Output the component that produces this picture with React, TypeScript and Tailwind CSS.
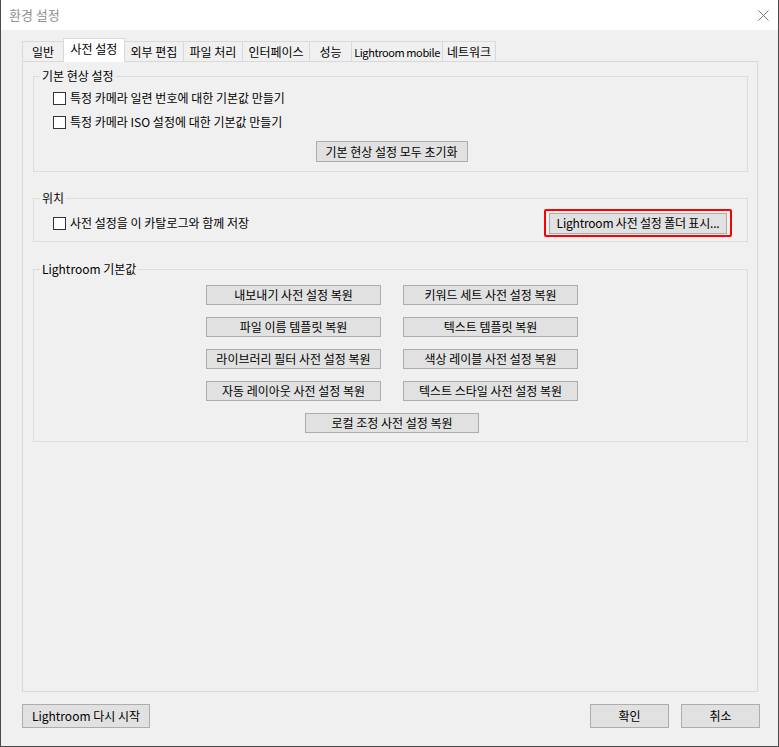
import React from "react";

function Checkbox() {
  return <span className="w-[13px] h-[13px] border border-[#333333] bg-white shrink-0" />;
}

function Tab({ label, cls }: { label: string; cls: string }) {
  return <div className={cls}>{label}</div>;
}

export default function App() {
  const tabBase =
    "h-[20px] border-t border-[#d9d9d9] bg-[#f0f0f0] flex items-center justify-center whitespace-nowrap shrink-0 overflow-hidden";
  const btn =
    "border border-[#adadad] bg-[#e1e1e1] flex items-center justify-center whitespace-nowrap";
  return (
    <div className="w-[779px] h-[747px] flex flex-col bg-[#f0f0f0] border-x border-b border-[#4a4a4a] font-['Noto_Sans_CJK_KR',sans-serif] text-[12px] leading-[16px] tracking-[0px] text-black overflow-hidden">
      {/* title bar */}
      <div className="h-[30px] bg-white flex items-center justify-between pl-[8px] pr-[9px] shrink-0">
        <span className="text-[#8f8f8f] text-[13px]">환경 설정</span>
        <svg width="11" height="11" viewBox="0 0 11 11">
          <path d="M0.5 0.5 L10.5 10.5 M10.5 0.5 L0.5 10.5" stroke="#777777" strokeWidth="1" />
        </svg>
      </div>

      <div className="flex flex-col pt-[8px]">
        <div className="pl-[21px] pr-[20px] flex flex-col">
          {/* tabs */}
          <div className="relative z-10 h-[23px] flex items-end">
            <Tab label="일반" cls={`${tabBase} w-[41px] border-l`} />
            <div className="h-[24px] -mb-px w-[62px] shrink-0 whitespace-nowrap bg-white border-t border-x border-[#d9d9d9] flex items-center justify-center pb-[3px]">
              사전 설정
            </div>
            <Tab label="외부 편집" cls={`${tabBase} w-[58px]`} />
            <Tab label="파일 처리" cls={`${tabBase} w-[59px] border-l`} />
            <Tab label="인터페이스" cls={`${tabBase} w-[67px] border-l`} />
            <Tab label="성능" cls={`${tabBase} w-[42px] border-l`} />
            <Tab label="Lightroom mobile" cls={`${tabBase} w-[91px] border-l text-[11px] tracking-[-0.4px]`} />
            <Tab label="네트워크" cls={`${tabBase} w-[54px] border-x`} />
          </div>

          {/* panel */}
          <div className="h-[631px] border border-[#d9d9d9] bg-[#f0f0f0] pt-[14px] pl-[10px] pr-[9px] flex flex-col">
            {/* group 1 */}
            <div className="relative border border-[#dcdcdc] pt-[13px] pb-[9px] flex flex-col">
              <span className="absolute -top-[9px] left-[6px] px-[2px] bg-[#f0f0f0]">기본 현상 설정</span>
              <div className="h-[16px] pl-[19px] flex items-center gap-[4px]">
                <Checkbox />
                <span>특정 카메라 일련 번호에 대한 기본값 만들기</span>
              </div>
              <div className="h-[16px] mt-[8px] pl-[19px] flex items-center gap-[4px]">
                <Checkbox />
                <span>특정 카메라 ISO 설정에 대한 기본값 만들기</span>
              </div>
              <div className="mt-[11px] flex justify-center pl-[2px]">
                <div className={`${btn} w-[152px] h-[21px]`}>기본 현상 설정 모두 초기화</div>
              </div>
            </div>

            {/* group 2 */}
            <div className="relative mt-[26px] border border-[#dcdcdc] pt-[10px] pb-[4px] pl-[19px] pr-[15px] flex items-center justify-between">
              <span className="absolute -top-[9px] left-[6px] px-[2px] bg-[#f0f0f0]">위치</span>
              <div className="h-[16px] flex items-center gap-[4px]">
                <Checkbox />
                <span>사전 설정을 이 카탈로그와 함께 저장</span>
              </div>
              <div className="w-[188px] h-[28px] border-2 border-[#ff0000] rounded-[2px] flex items-center justify-center">
                <div className={`${btn} w-[178px] h-[21px] tracking-[-0.2px]`}>Lightroom 사전 설정 폴더 표시...</div>
              </div>
            </div>

            {/* group 3 */}
            <div className="relative mt-[27px] border border-[#dcdcdc] pt-[15px] pb-[8px] pl-[3px] flex flex-col items-center gap-[12px]">
              <span className="absolute -top-[9px] left-[6px] px-[2px] bg-[#f0f0f0]">Lightroom 기본값</span>
              <div className="flex gap-[22px]">
                <div className={`${btn} w-[175px] h-[20px]`}>내보내기 사전 설정 복원</div>
                <div className={`${btn} w-[175px] h-[20px]`}>키워드 세트 사전 설정 복원</div>
              </div>
              <div className="flex gap-[22px]">
                <div className={`${btn} w-[175px] h-[20px]`}>파일 이름 템플릿 복원</div>
                <div className={`${btn} w-[175px] h-[20px]`}>텍스트 템플릿 복원</div>
              </div>
              <div className="flex gap-[22px]">
                <div className={`${btn} w-[175px] h-[20px]`}>라이브러리 필터 사전 설정 복원</div>
                <div className={`${btn} w-[175px] h-[20px]`}>색상 레이블 사전 설정 복원</div>
              </div>
              <div className="flex gap-[22px]">
                <div className={`${btn} w-[175px] h-[20px]`}>자동 레이아웃 사전 설정 복원</div>
                <div className={`${btn} w-[175px] h-[20px]`}>텍스트 스타일 사전 설정 복원</div>
              </div>
              <div className="flex">
                <div className={`${btn} w-[174px] h-[20px]`}>로컬 조정 사전 설정 복원</div>
              </div>
            </div>
          </div>
        </div>

        {/* bottom buttons */}
        <div className="mt-[12px] pl-[21px] pr-[18px] flex items-center">
          <div className={`${btn} w-[128px] h-[24px]`}>Lightroom 다시 시작</div>
          <div className="flex-1" />
          <div className="flex gap-[12px]">
            <div className={`${btn} w-[79px] h-[24px]`}>확인</div>
            <div className={`${btn} w-[79px] h-[24px]`}>취소</div>
          </div>
        </div>
      </div>
    </div>
  );
}
